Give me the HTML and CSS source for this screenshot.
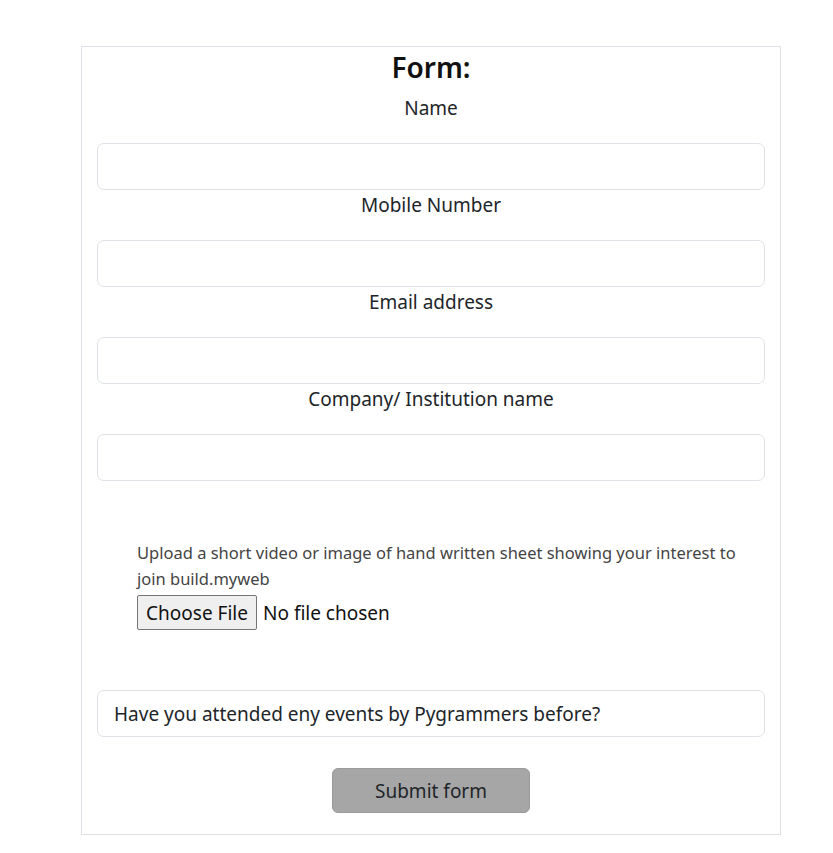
FILE: index.html
```html
<!DOCTYPE html>
<html>
<head>
<meta charset="utf-8">
<link rel="stylesheet" href="styles.css">
</head>
<body>
<form class="card">
  <h2 class="title">Form:</h2>
  <div class="group">
    <label class="label">Name</label>
    <input class="field" type="text">
  </div>
  <div class="group">
    <label class="label">Mobile Number</label>
    <input class="field" type="text">
  </div>
  <div class="group">
    <label class="label">Email address</label>
    <input class="field" type="text">
  </div>
  <div class="group">
    <label class="label">Company/ Institution name</label>
    <input class="field" type="text">
  </div>
  <div class="upload">
    <p class="upload-text">Upload a short video or image of hand written sheet showing your interest to join build.myweb</p>
    <div class="file-row"><span class="file-btn">Choose File</span><span class="file-status">No file chosen</span></div>
  </div>
  <div class="question">Have you attended eny events by Pygrammers before?</div>
  <div class="actions"><button class="submit" type="button">Submit form</button></div>
</form>
</body>
</html>
```
FILE: styles.css
```css
html, body {
  margin: 0;
  padding: 0;
  background: #fff;
}
body {
  font-family: "Noto Sans", "Open Sans", sans-serif;
  color: #212529;
  padding-top: 46px;
}
.card {
  width: 700px;
  box-sizing: border-box;
  margin-left: 81px;
  border: 1px solid #dee2e6;
  padding: 0 15px 21px;
  display: flex;
  flex-direction: column;
}
.title {
  margin: 0 0 6px;
  text-align: center;
  font-size: 28px;
  font-weight: 600;
  line-height: 40px;
  color: #111;
}
.group {
  display: flex;
  flex-direction: column;
}
.label {
  text-align: center;
  font-size: 19px;
  line-height: 30px;
  margin-bottom: 20px;
}
.field {
  height: 47px;
  box-sizing: border-box;
  border: 1px solid #dee2e6;
  border-radius: 7px;
  background: #fff;
  margin: 0;
}
.upload {
  padding: 59px 0 0 40px;
}
.upload-text {
  margin: 0;
  font-size: 16.5px;
  line-height: 26px;
  color: #444;
  padding-right: 20px;
}
.file-row {
  display: flex;
  align-items: center;
  gap: 6px;
  margin-top: 3px;
}
.file-btn {
  box-sizing: border-box;
  height: 35px;
  width: 120px;
  border: 1px solid #767676;
  border-radius: 2px;
  background: #efefef;
  font-size: 19px;
  display: flex;
  align-items: center;
  justify-content: center;
  color: #111;
}
.file-status {
  font-size: 19px;
  color: #111;
}
.question {
  margin-top: 60px;
  height: 47px;
  box-sizing: border-box;
  border: 1px solid #dee2e6;
  border-radius: 7px;
  padding: 0 16px;
  display: flex;
  align-items: center;
  font-size: 19px;
}
.actions {
  display: flex;
  justify-content: center;
  margin-top: 31px;
}
.submit {
  width: 198px;
  height: 45px;
  background: #a6a6a6;
  border: 1px solid #9a9a9a;
  border-radius: 6px;
  font-family: inherit;
  font-size: 19px;
  color: #212529;
}
```
